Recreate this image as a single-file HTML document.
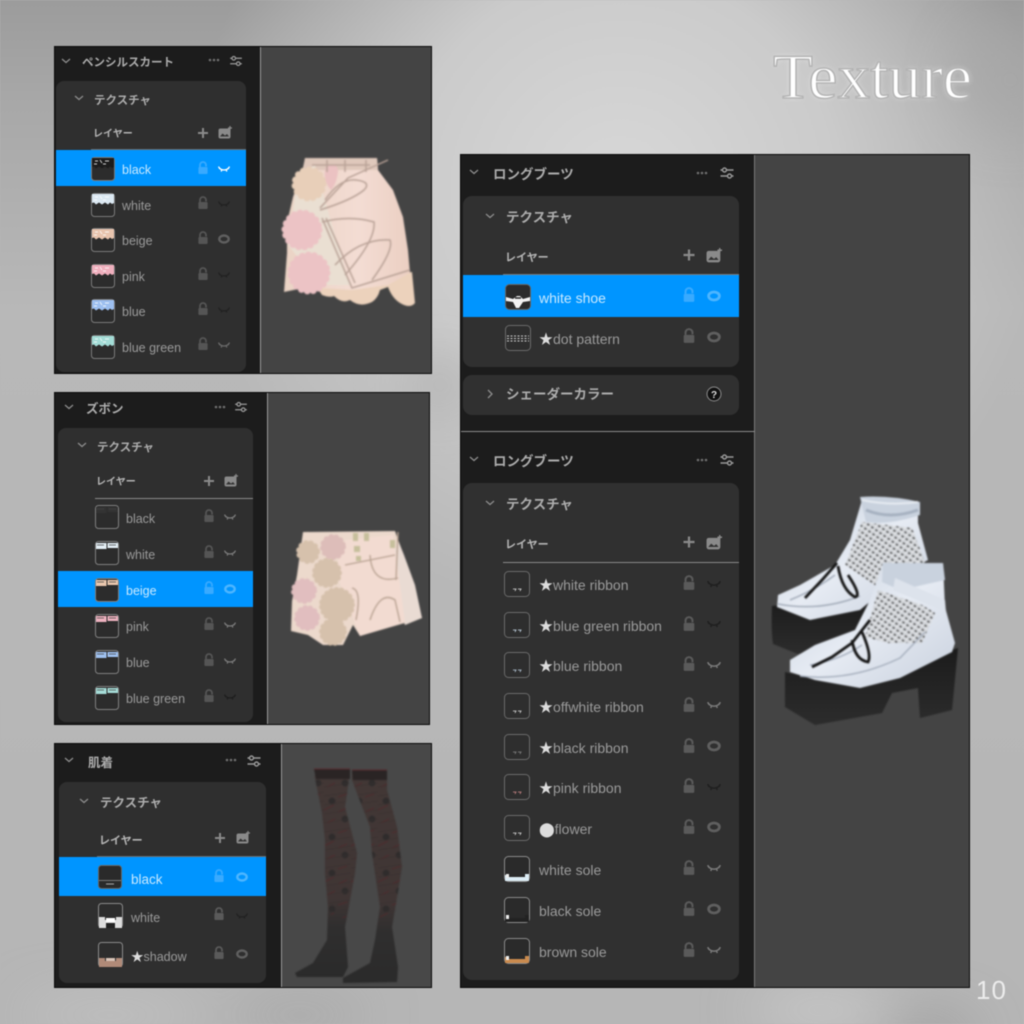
<!DOCTYPE html>
<html lang="ja"><head><meta charset="utf-8"><title>Texture</title>
<style>
html,body{margin:0;padding:0;width:1024px;height:1024px;overflow:hidden;background:#b8b8b8}
svg{display:block;position:absolute;left:0;top:0}
#main{filter:blur(.4px)}
text{font-family:"Liberation Sans","Noto Sans CJK JP",sans-serif}
.h{fill:#acacac;font-weight:700}
.t{fill:#9a9a9a}
.s{fill:#c9e9ff}
.w{fill:#dcdcdc}
.l{fill:#b4b4b4;font-weight:700}
.f12{font-size:12.5px}.f14{font-size:14px}
.h12{font-size:11.5px}.h13{font-size:12.5px}.h14{font-size:13.5px}
.c{fill:none;stroke:#8c8c8c;stroke-width:1.3}
.art{filter:blur(.8px)}
</style></head><body>
<svg id="main" width="1024" height="1024" viewBox="0 0 1024 1024" xmlns="http://www.w3.org/2000/svg">
<defs>
<radialGradient id="bg1" gradientUnits="userSpaceOnUse" cx="620" cy="190" r="430"><stop offset="0" stop-color="#d8d8d8"/><stop offset=".5" stop-color="#cbcbcb"/><stop offset="1" stop-color="#cbcbcb" stop-opacity="0"/></radialGradient>
<linearGradient id="bgt" x1="0" y1="0" x2="0" y2="1"><stop offset="0" stop-color="#9c9c9c"/><stop offset=".1" stop-color="#a8a8a8"/><stop offset=".3" stop-color="#b8b8b8"/><stop offset="1" stop-color="#b6b6b6"/></linearGradient>
<filter id="b30" x="-80%" y="-80%" width="260%" height="260%"><feGaussianBlur stdDeviation="26"/></filter>
<filter id="glow" x="-20%" y="-40%" width="140%" height="180%"><feGaussianBlur stdDeviation="3"/></filter>
<linearGradient id="leg" x1="0" y1="0" x2="0" y2="1"><stop offset="0" stop-color="#423735"/><stop offset=".62" stop-color="#3f3534"/><stop offset=".76" stop-color="#2f2e2e"/><stop offset="1" stop-color="#2a2a2a"/></linearGradient>
<linearGradient id="sole" x1="0" y1="0" x2="0" y2="1"><stop offset="0" stop-color="#1b1b1b"/><stop offset="1" stop-color="#2c2c2c"/></linearGradient>
<linearGradient id="up" x1="0" y1="0" x2="1" y2="1"><stop offset="0" stop-color="#c6d0dd"/><stop offset=".5" stop-color="#e6ebf3"/><stop offset="1" stop-color="#c8d0dd"/></linearGradient>
<linearGradient id="skb" x1="0" y1="0" x2="1" y2="0"><stop offset="0" stop-color="#ead3c4"/><stop offset=".6" stop-color="#f3dcd3"/><stop offset="1" stop-color="#ebcfc2"/></linearGradient>
<pattern id="mesh" width="5" height="5" patternUnits="userSpaceOnUse" patternTransform="rotate(35)"><rect width="5" height="5" fill="#d2d5d9"/><rect x="1" y="1" width="2.200" height="1.400" fill="#3a3a3a"/><rect x="3.500" y="3" width="1.200" height="1.200" fill="#fff"/></pattern>
<pattern id="dots" width="27" height="36" patternUnits="userSpaceOnUse"><circle cx="8" cy="9" r="3.400" fill="#2f2c2c"/><circle cx="21" cy="27" r="3.400" fill="#2f2c2c"/><path d="M0 18l10-5M14 5l9-3M3 31l8-4M14 20l9-4" stroke="#52282b" stroke-width=".8"/><path d="M0 4l27-4M0 13l27-4M0 22l27-4M0 31l27-4" stroke="#362f2e" stroke-width=".6"/></pattern>

<g id="lock"><rect x="-4.600" y="-1" width="9.200" height="7" rx="1" fill="currentColor"/><path d="M-3 -1V-3A3 3 0 0 1 3 -3V-1.500" fill="none" stroke="currentColor" stroke-width="1.800"/></g>
<g id="eye"><ellipse cx="0" cy="0" rx="4.700" ry="3.500" fill="none" stroke="currentColor" stroke-width="2.400"/></g>
<g id="shut" fill="none" stroke="currentColor" stroke-width="1.300"><path d="M-5 -1Q0 3 5 -1"/><path d="M-5.600 -2.400L-4 -.4M5.600 -2.400L4 -.4M-2.200 .8L-2.800 2.600M2.200 .8L2.800 2.600"/></g>
<g id="plus"><path d="M-5 0H5M0 -5V5" stroke="#8a8a8a" stroke-width="2"/></g>
<g id="img"><rect x="-6.500" y="-4.500" width="12" height="10" rx="2" fill="#8a8a8a"/><path d="M-5 3.500L-2.500 0.500L0 2.500L2 1L4 3.500Z" fill="#333"/><path d="M5 -7V-3M3 -5H7" stroke="#8a8a8a" stroke-width="1.200"/></g>
<g id="sl" fill="none" stroke="#9a9a9a" stroke-width="1.400"><path d="M-6.500 -3H6.500M-6.500 3H6.500"/><circle cx="-2.500" cy="-3" r="2" fill="#1c1c1c"/><circle cx="2.500" cy="3" r="2" fill="#1c1c1c"/></g>
<g id="dt" fill="#6e6e6e"><circle cx="-4" r="1.300"/><circle r="1.300"/><circle cx="4" r="1.300"/></g>
<g id="cd"><path d="M-4 -2L0 1.500L4 -2" fill="none" stroke="#8c8c8c" stroke-width="1.300"/></g>

<g id="lace"><rect x=".5" y=".5" width="23" height="23" rx="3" fill="#2c2c2c" stroke="#7a7a7a"/><path d="M1 1H23V10L21 11L19 9.500L17 11.500L14 9.500L11 11.500L8 9.500L5 11.500L3 9.500L1 10Z" fill="currentColor"/><path d="M4 4h3M9 3l2 3M14 4h4M3 7h3M12 7h3" stroke="#fff" stroke-width=".9" opacity=".8"/></g>
<g id="tw"><rect x=".5" y=".5" width="23" height="23" rx="3" fill="#2c2c2c" stroke="#7f7f7f"/><rect x="1" y="2" width="10.500" height="6" fill="currentColor"/><rect x="12.500" y="2" width="10.500" height="5" fill="currentColor"/><path d="M2 4h7M14 4h7" stroke="#444" stroke-width=".8"/></g>
<g id="rb"><rect x=".5" y=".5" width="25" height="25" rx="4" fill="#2e2e2e" stroke="#6a6a6a"/><path d="M9 18h3l-1 2M14 18h3l-1 2" fill="none" stroke="currentColor" stroke-width=".8"/></g>
<g id="so"><rect x=".5" y=".5" width="25" height="25" rx="4" fill="#2a2a2a" stroke="#8a8a8a"/><path d="M1 19h3v2h17v-3h4v7H1z" fill="currentColor"/><rect x="2" y="18" width="3" height="4" fill="#eee"/></g>
</defs>

<!-- background -->
<rect width="1024" height="1024" fill="url(#bgt)"/>
<rect width="1024" height="1024" fill="url(#bg1)"/>
<g filter="url(#b30)">
<ellipse cx="440" cy="385" rx="35" ry="30" fill="#a2a2a2" opacity=".5"/>
<ellipse cx="300" cy="1015" rx="70" ry="18" fill="#999" opacity=".5"/>
<ellipse cx="930" cy="1035" rx="50" ry="22" fill="#8c8c8c" opacity=".5"/>
<ellipse cx="820" cy="1010" rx="70" ry="16" fill="#d4d4d4" opacity=".8"/>
<ellipse cx="110" cy="1015" rx="90" ry="16" fill="#c6c6c6" opacity=".8"/>
<ellipse cx="1010" cy="80" rx="50" ry="50" fill="#a6a6a6" opacity=".7"/>
</g>

<!-- Title -->
<text x="773" y="98" font-size="63" fill="#fff" textLength="199" lengthAdjust="spacingAndGlyphs" filter="url(#glow)" opacity=".4" style="font-family:'Liberation Serif',serif">Texture</text>
<text x="773" y="98" font-size="63" fill="#fff" stroke="#b4b4b4" stroke-width="1.500" textLength="199" lengthAdjust="spacingAndGlyphs" style="font-family:'Liberation Serif',serif">Texture</text>
<text x="976" y="999" font-size="26" fill="#ececec" letter-spacing="1">10</text>

<!-- PANEL 1 -->
<rect x="54.500" y="46.500" width="377" height="327" fill="#1c1c1c" stroke="#0a0a0a"/>
<rect x="261" y="47" width="170" height="326" fill="#444"/>
<rect x="260" y="47" width="1" height="326" fill="#9a9a9a"/>
<rect x="56" y="81" width="190" height="291" rx="8" fill="#2f2f2f"/>
<use href="#cd" x="66" y="61"/><text x="82" y="66" class="h h12">ペンシルスカート</text><use href="#dt" x="214" y="60"/><use href="#sl" transform="translate(236 61) scale(.9)"/>
<use href="#cd" x="79" y="98"/><text x="94" y="104" class="h h12">テクスチャ</text>
<text x="93" y="137" class="l" font-size="10">レイヤー</text><use href="#plus" x="203" y="133"/><use href="#img" x="225" y="133"/>
<rect x="91" y="149" width="155" height="1" fill="#6e6e6e"/>
<rect x="56" y="150" width="190" height="36" fill="#0095ff"/>
<use href="#lace" x="91" y="157" style="color:#1c1c1c"/>
<text x="122" y="174" class="s f12">black</text>
<use href="#lace" x="91" y="193" style="color:#dbe8f2"/><text x="122" y="210" class="t f12">white</text>
<use href="#lace" x="91" y="228" style="color:#e8c4ae"/><text x="122" y="245" class="t f12">beige</text>
<use href="#lace" x="91" y="264" style="color:#efafbd"/><text x="122" y="281" class="t f12">pink</text>
<use href="#lace" x="91" y="299" style="color:#9dbff0"/><text x="122" y="316" class="t f12">blue</text>
<use href="#lace" x="91" y="335" style="color:#a3dcd6"/><text x="122" y="352" class="t f12">blue green</text>
<g style="color:#555">
<use href="#lock" x="203" y="168" style="color:#39aaff"/><use href="#lock" x="203" y="203"/><use href="#lock" x="203" y="238"/><use href="#lock" x="203" y="274"/><use href="#lock" x="203" y="309"/><use href="#lock" x="203" y="344"/>
</g>
<use href="#shut" x="224" y="169" style="color:#fff"/><use href="#shut" x="224" y="204" style="color:#222"/><use href="#eye" x="224" y="239" style="color:#5f5f5f"/><use href="#shut" x="224" y="275" style="color:#222"/><use href="#shut" x="224" y="310" style="color:#222"/><use href="#shut" x="224" y="345" style="color:#6a6a6a"/>
<!-- skirt -->
<g class="art">
<path d="M316 286L322 295Q330 298 334 296Q342 304 350 300Q360 308 372 302Q378 298 380 290L388 287Q392 298 400 303Q410 309 415 303L412 272L352 280Z" fill="#ecd2bc"/>
<path d="M305 158L377 158L378 170L393 190L403 217L408 250L410 273L388 285L352 290L320 288L303 288L284 292L287 253L287 223L293 197L303 168Z" fill="url(#skb)"/>
<path d="M305 158H377L378 170H304Z" fill="#dfc8bb"/>
<path d="M298 175L315 165L332 225L350 285L320 285L288 245Z" fill="#eadfd2"/>
<circle cx="309" cy="184" r="14" fill="#e8cfb9" stroke="#e8cfb9" stroke-width="7" stroke-dasharray="0 6" stroke-linecap="round"/>
<path d="M326 166Q338 161 338 172Q336 185 331 190Q322 180 326 166Z" fill="#ebc2c2"/>
<circle cx="302" cy="230" r="17" fill="#ecc3c5" stroke="#ecc3c5" stroke-width="7" stroke-dasharray="0 6" stroke-linecap="round"/>
<circle cx="309" cy="273" r="18" fill="#ecc3c5" stroke="#ecc3c5" stroke-width="7" stroke-dasharray="0 6" stroke-linecap="round"/>
<g fill="none" stroke="#b9a297" stroke-width="1.500">
<path d="M320 208L348 178L388 160M320 210Q352 200 364 190Q372 182 356 180Q340 178 325 200"/>
<path d="M322 222Q350 215 374 222Q376 240 345 275"/>
<path d="M335 265Q360 238 390 240Q394 250 372 280"/>
<path d="M322 218L352 288L410 270M326 218L355 283"/>
<path d="M312 165H370M327 160V172M345 160V172M366 160V172"/>
</g></g>

<!-- PANEL 2 -->
<rect x="54.500" y="392.500" width="375" height="332" fill="#1c1c1c" stroke="#0a0a0a"/>
<rect x="268" y="393" width="161" height="331" fill="#444"/>
<rect x="267" y="393" width="1" height="331" fill="#9a9a9a"/>
<rect x="58" y="428" width="195" height="294" rx="8" fill="#2f2f2f"/>
<use href="#cd" x="69" y="407"/><text x="86" y="413" class="h h13">ズボン</text><use href="#dt" x="220" y="407"/><use href="#sl" transform="translate(241 407) scale(.9)"/>
<use href="#cd" x="82" y="445"/><text x="97" y="451" class="h h12">テクスチャ</text>
<text x="96" y="485" class="l" font-size="10">レイヤー</text><use href="#plus" x="209" y="481"/><use href="#img" x="231" y="481"/>
<rect x="95" y="498" width="158" height="1" fill="#8a8a8a"/>
<rect x="58" y="571" width="195" height="36" fill="#0095ff"/>
<use href="#tw" x="95" y="505" style="color:#333"/><text x="126" y="523" class="t f12">black</text>
<use href="#tw" x="95" y="541" style="color:#e3eef5"/><text x="126" y="559" class="t f12">white</text>
<use href="#tw" x="95" y="578" style="color:#e9c7ae"/><text x="126" y="595" class="s f12">beige</text>
<use href="#tw" x="95" y="614" style="color:#edb1bf"/><text x="126" y="631" class="t f12">pink</text>
<use href="#tw" x="95" y="650" style="color:#9fc1f0"/><text x="126" y="667" class="t f12">blue</text>
<use href="#tw" x="95" y="686" style="color:#a5dcd7"/><text x="126" y="703" class="t f12">blue green</text>
<g style="color:#555">
<use href="#lock" x="209" y="516"/><use href="#lock" x="209" y="552"/><use href="#lock" x="209" y="588" style="color:#39aaff"/><use href="#lock" x="209" y="624"/><use href="#lock" x="209" y="660"/><use href="#lock" x="209" y="696"/>
</g>
<use href="#shut" x="230" y="517" style="color:#7a7a7a"/><use href="#shut" x="230" y="553" style="color:#7a7a7a"/><use href="#eye" x="230" y="589" style="color:#4db5ff"/><use href="#shut" x="230" y="625" style="color:#7a7a7a"/><use href="#shut" x="230" y="661" style="color:#7a7a7a"/><use href="#shut" x="230" y="697" style="color:#1e1e1e"/>
<!-- shorts -->
<g class="art">
<path d="M303 532L395 531L402 551L413 585L422 618L360 636L353 625L343 645L323 645L308 635L291 631L292 601L297 575Z" fill="#ecd9cc"/>
<path d="M398 540L404 555L415 585L422 618L405 625L388 580Z" fill="#e9dbd3"/>
<path d="M345 540L393 535L398 570L405 622L360 636L350 610L335 570Z" fill="#f2dbd1"/>
<circle cx="333" cy="547" r="10" fill="#ddbdb9" stroke="#ddbdb9" stroke-width="6" stroke-dasharray="0 5" stroke-linecap="round"/>
<circle cx="308" cy="552" r="9" fill="#d6c1ac" stroke="#d6c1ac" stroke-width="6" stroke-dasharray="0 5" stroke-linecap="round"/>
<circle cx="327" cy="573" r="12" fill="#d6c1ac" stroke="#d6c1ac" stroke-width="6" stroke-dasharray="0 5" stroke-linecap="round"/>
<circle cx="304" cy="591" r="10" fill="#e1bebf" stroke="#e1bebf" stroke-width="6" stroke-dasharray="0 5" stroke-linecap="round"/>
<circle cx="337" cy="605" r="15" fill="#d6c1ac" stroke="#d6c1ac" stroke-width="6" stroke-dasharray="0 5" stroke-linecap="round"/>
<circle cx="307" cy="618" r="10" fill="#e1bebf" stroke="#e1bebf" stroke-width="6" stroke-dasharray="0 5" stroke-linecap="round"/>
<circle cx="333" cy="632" r="11" fill="#d6c1ac" stroke="#d6c1ac" stroke-width="6" stroke-dasharray="0 5" stroke-linecap="round"/>
<g fill="none" stroke="#b9a393" stroke-width="1.400">
<path d="M345 565L395 555M370 555Q372 585 398 578M398 532L396 580M352 588Q362 590 356 620M370 620Q380 590 395 600L400 622"/>
</g>
<g fill="#c6bf9c"><rect x="353" y="533" width="5" height="8"/><rect x="364" y="533" width="5" height="8"/><rect x="354" y="546" width="6" height="6"/><rect x="356" y="556" width="5" height="5"/><rect x="390" y="540" width="5" height="8"/></g>
</g>

<!-- PANEL 3 -->
<rect x="54.500" y="743.500" width="377" height="244" fill="#1c1c1c" stroke="#0a0a0a"/>
<rect x="282" y="744" width="149" height="243" fill="#484848"/>
<rect x="281" y="744" width="1" height="243" fill="#9a9a9a"/>
<rect x="59" y="782" width="207" height="201" rx="8" fill="#2f2f2f"/>
<use href="#cd" x="69" y="760"/><text x="88" y="767" class="h h13">肌着</text><use href="#dt" x="231" y="760"/><use href="#sl" transform="translate(254 761)"/>
<use href="#cd" x="84" y="801"/><text x="100" y="807" class="h f12">テクスチャ</text>
<text x="99" y="844" class="l" font-size="11">レイヤー</text><use href="#plus" x="220" y="838"/><use href="#img" x="243" y="838"/>
<rect x="97" y="856" width="169" height="1" fill="#6e6e6e"/>
<rect x="59" y="857" width="207" height="39" fill="#0095ff"/>
<g transform="translate(98 865)"><rect x=".5" y=".5" width="23" height="23" rx="3" fill="#2a2a2a" stroke="#666"/><rect x="1" y="15" width="22" height="1" fill="#777"/><path d="M8 19h8" stroke="#aaa"/></g>
<g transform="translate(98 903)"><rect x=".5" y=".5" width="24" height="24" rx="3" fill="#2d2d2d" stroke="#8a8a8a"/><path d="M1 14H7V17H18V14H24V25H1Z" fill="#ddd"/><path d="M8 15h9v4H8z" fill="#fff"/><path d="M8 20h9v5H8z" fill="#222"/></g>
<g transform="translate(98 942)"><rect x=".5" y=".5" width="24" height="24" rx="3" fill="#2d2d2d" stroke="#8a8a8a"/><path d="M1 16H7V19H18V16H24V25H1Z" fill="#b08a78"/><path d="M8 16h9v3H8z" fill="#d9c5b8"/></g>
<text x="131" y="884" class="s" font-size="13.500">black</text>
<text x="131" y="922" class="t f12">white</text>
<text x="131" y="961" class="t f12"><tspan class="w">★</tspan>shadow</text>
<g style="color:#5a5a5a"><use href="#lock" x="219" y="876" style="color:#39aaff"/><use href="#lock" x="219" y="914"/><use href="#lock" x="219" y="953"/></g>
<use href="#eye" x="242" y="877" style="color:#4db5ff"/><use href="#shut" x="242" y="916" style="color:#222"/><use href="#eye" x="242" y="954" style="color:#5f5f5f"/>
<!-- stockings -->
<g class="art">
<path d="M315 770L315 778L322 813L325 840L325 873L328 907L327 940L313 963L295 973L297 977L343 977L348 967L345 927L355 873L357 853L345 807L350 772L350 770Z" fill="url(#leg)"/>
<path d="M352 771L352 780L370 827L372 853L380 907L375 940L370 963L343 978L343 983L397 982L398 967L392 927L402 867L397 827L387 790L387 771Z" fill="url(#leg)"/>
<path d="M315 778L322 813L325 840L325 873L328 907L332 918H346L355 873L357 853L345 807L350 778Z" fill="url(#dots)"/>
<path d="M352 780L370 827L372 853L380 907L380 918H394L402 867L397 827L387 790V780Z" fill="url(#dots)"/>
<path d="M314 769H350V779H316ZM352 770H387V780H353Z" fill="#2a2424"/>
<path d="M314 769H350M352 770H387" stroke="#5a2a2e" stroke-width="1"/>
</g>

<!-- PANEL 4 -->
<rect x="460.500" y="154.500" width="509" height="833" fill="#1c1c1c" stroke="#0a0a0a"/>
<rect x="755" y="155" width="214" height="832" fill="#444"/>
<rect x="754" y="155" width="1" height="832" fill="#7a7a7a"/>
<rect x="461" y="431" width="294" height="1" fill="#8c8c8c"/>
<rect x="463" y="196" width="276" height="171" rx="9" fill="#303030"/>
<rect x="463" y="375" width="276" height="40" rx="9" fill="#303030"/>
<rect x="463" y="483" width="276" height="497" rx="9" fill="#303030"/>

<use href="#cd" x="474" y="172"/><text x="493" y="179" class="h h14">ロングブーツ</text><use href="#dt" x="702" y="173"/><use href="#sl" transform="translate(727 173)"/>
<use href="#cd" x="490" y="216"/><text x="506" y="222" class="h h14">テクスチャ</text>
<text x="505" y="261" class="l" font-size="11">レイヤー</text><use href="#plus" transform="translate(689 255) scale(1.100)"/><use href="#img" transform="translate(714 256) scale(1.150)"/>
<rect x="503" y="274" width="236" height="1" fill="#7a7a7a"/>
<rect x="463" y="275" width="276" height="42" fill="#0095ff"/>
<g transform="translate(505 284)"><rect x=".5" y=".5" width="25" height="25" rx="4" fill="#2b2b2b" stroke="#666"/><path d="M1 13L8 15L12 12H15L18 15L25 13V17L18 18L14 24L11 24L8 18L1 17Z" fill="#f2f2f2"/><path d="M10 14h6" stroke="#222" stroke-width="1.500"/></g>
<text x="539" y="303" class="s f14">white shoe</text>
<g transform="translate(505 325)"><rect x=".5" y=".5" width="25" height="25" rx="4" fill="#2e2e2e" stroke="#6a6a6a"/><path d="M2 11h22M2 13.500h22M2 16h22" stroke="#d0d0d0" stroke-width="1" stroke-dasharray="2 1.500"/></g>
<text x="539" y="344" class="t f14"><tspan class="w">★</tspan>dot pattern</text>
<use href="#lock" transform="translate(689 295) scale(1.150)" style="color:#39aaff"/>
<use href="#lock" transform="translate(689 336) scale(1.150)" style="color:#5a5a5a"/>
<use href="#eye" transform="translate(714 296) scale(1.150)" style="color:#4db5ff"/>
<use href="#eye" transform="translate(714 337) scale(1.150)" style="color:#5f5f5f"/>
<path d="M488 390L492 394L488 398" class="c"/>
<text x="506" y="399" class="h h14">シェーダーカラー</text>
<circle cx="714" cy="394" r="7" fill="#111" stroke="#8c8c8c" stroke-width="1"/><text x="714" y="398" text-anchor="middle" font-size="10" font-weight="700" fill="#ddd">?</text>

<use href="#cd" x="474" y="459"/><text x="493" y="466" class="h h14">ロングブーツ</text><use href="#dt" x="702" y="460"/><use href="#sl" transform="translate(727 460)"/>
<use href="#cd" x="490" y="503"/><text x="506" y="509" class="h h14">テクスチャ</text>
<text x="505" y="548" class="l" font-size="11">レイヤー</text><use href="#plus" transform="translate(689 542) scale(1.100)"/><use href="#img" transform="translate(714 543) scale(1.150)"/>
<rect x="503" y="562" width="236" height="1" fill="#8a8a8a"/>

<use href="#rb" x="504" y="571" style="color:#ddd"/><text x="539" y="590" class="t f14"><tspan class="w">★</tspan>white ribbon</text>
<use href="#rb" x="504" y="612" style="color:#cde"/><text x="539" y="631" class="t f14"><tspan class="w">★</tspan>blue green ribbon</text>
<use href="#rb" x="504" y="652" style="color:#bcd"/><text x="539" y="671" class="t f14"><tspan class="w">★</tspan>blue ribbon</text>
<use href="#rb" x="504" y="693" style="color:#ddd"/><text x="539" y="712" class="t f14"><tspan class="w">★</tspan>offwhite ribbon</text>
<use href="#rb" x="504" y="734" style="color:#888"/><text x="539" y="753" class="t f14"><tspan class="w">★</tspan>black ribbon</text>
<use href="#rb" x="504" y="774" style="color:#c88"/><text x="539" y="793" class="t f14"><tspan class="w">★</tspan>pink ribbon</text>
<use href="#rb" x="504" y="815" style="color:#ddd"/><text x="539" y="834" class="t f14"><tspan class="w">⬤</tspan>flower</text>
<use href="#so" x="504" y="856" style="color:#dcecf5"/><text x="539" y="875" class="t f14">white sole</text>
<use href="#so" x="504" y="897" style="color:#222"/><text x="539" y="916" class="t f14">black sole</text>
<use href="#so" x="504" y="938" style="color:#c98a4e"/><text x="539" y="957" class="t f14">brown sole</text>

<g style="color:#5a5a5a">
<use href="#lock" transform="translate(689 583) scale(1.150)"/><use href="#lock" transform="translate(689 624) scale(1.150)"/><use href="#lock" transform="translate(689 664) scale(1.150)"/><use href="#lock" transform="translate(689 705) scale(1.150)"/><use href="#lock" transform="translate(689 746) scale(1.150)"/><use href="#lock" transform="translate(689 786) scale(1.150)"/><use href="#lock" transform="translate(689 827) scale(1.150)"/><use href="#lock" transform="translate(689 868) scale(1.150)"/><use href="#lock" transform="translate(689 909) scale(1.150)"/><use href="#lock" transform="translate(689 950) scale(1.150)"/>
</g>
<use href="#shut" transform="translate(714 584) scale(1.150)" style="color:#1f1f1f"/>
<use href="#shut" transform="translate(714 624) scale(1.150)" style="color:#1f1f1f"/>
<use href="#shut" transform="translate(714 665) scale(1.150)" style="color:#7a7a7a"/>
<use href="#shut" transform="translate(714 705) scale(1.150)" style="color:#7a7a7a"/>
<use href="#eye" transform="translate(714 746) scale(1.150)" style="color:#5f5f5f"/>
<use href="#shut" transform="translate(714 787) scale(1.150)" style="color:#1f1f1f"/>
<use href="#eye" transform="translate(714 827) scale(1.150)" style="color:#5f5f5f"/>
<use href="#shut" transform="translate(714 868) scale(1.150)" style="color:#7a7a7a"/>
<use href="#eye" transform="translate(714 909) scale(1.150)" style="color:#5f5f5f"/>
<use href="#shut" transform="translate(714 950) scale(1.150)" style="color:#7a7a7a"/>

<!-- boots -->
<g class="art">
<path d="M772 606Q771 630 773 644L798 654L845 644L862 623L880 605L830 600Z" fill="url(#sole)"/>
<path d="M862 500L918 502L918 523L928 560L905 572L860 610L810 620L777 607L778 595L800 585L835 565L850 540Z" fill="url(#up)"/>
<path d="M862 522L912 528L925 562L882 590L845 565Z" fill="url(#mesh)"/>
<path d="M860 497Q890 495 920 502V515Q890 525 866 522Z" fill="#c9d2de"/>
<path d="M866 510Q890 520 918 510" stroke="#a6b1c0" stroke-width="3" fill="none"/>
<path d="M862 500Q890 506 918 502" stroke="#e6ebf1" stroke-width="2" fill="none"/>
<path d="M778 604Q820 612 860 596M790 600Q815 590 835 575" stroke="#a4adba" stroke-width="1.500" fill="none"/>
<path d="M805 598L822 580L837 563M838 566Q842 590 855 597Q862 596 848 575" fill="none" stroke="#161616" stroke-width="2.800"/>
<path d="M785 672L785 707L815 725L882 713L892 693L918 688L920 718L952 710L958 648L890 670L820 680Z" fill="url(#sole)"/>
<path d="M883 563L943 563L945 607L955 643L952 652L900 678L860 688L815 680L790 672L790 660L815 645L855 630L870 600Z" fill="url(#up)"/>
<path d="M878 590L922 605L935 613L922 643L888 643L865 637Z" fill="url(#mesh)"/>
<path d="M883 563L943 563L945 580L900 590L882 582Z" fill="#c9d2de"/>
<path d="M895 578L945 600L946 612L893 590Z" fill="#dde3ec"/>
<path d="M800 676Q850 682 900 658L925 632M810 665Q840 660 862 645" stroke="#a8b1bf" stroke-width="1.500" fill="none"/>
<path d="M812 667L832 657L852 643L870 620M852 640Q855 660 868 662Q872 655 862 632" fill="none" stroke="#141414" stroke-width="2.800"/>
</g>
</svg>
</body></html>
